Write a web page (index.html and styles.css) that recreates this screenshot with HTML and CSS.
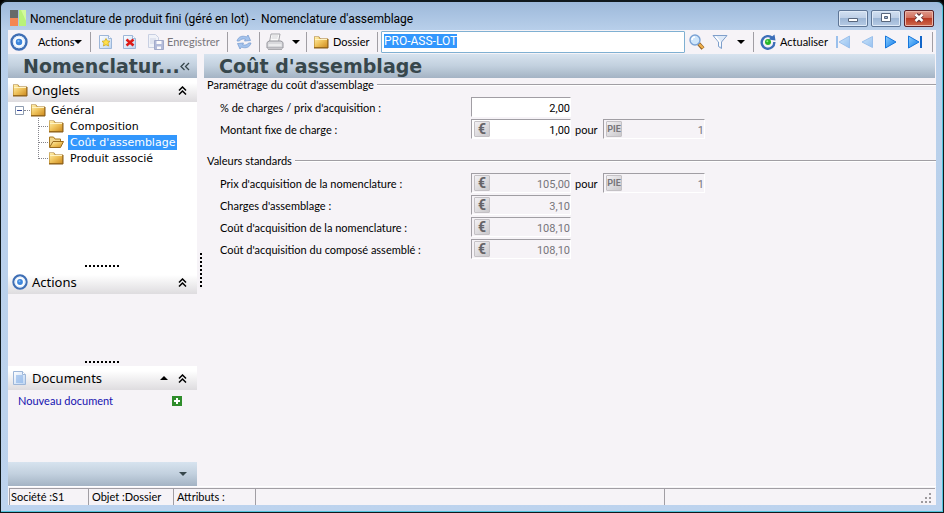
FILE: index.html
```html
<!DOCTYPE html>
<html lang="fr">
<head>
<meta charset="utf-8">
<title>Nomenclature de produit fini</title>
<link rel="stylesheet" href="styles.css">
</head>
<body>
<svg class="defs" aria-hidden="true">
  <defs>
    <linearGradient id="gold" x1="0" y1="0" x2="1" y2="1"><stop offset="0" stop-color="#fff0b0"/><stop offset=".5" stop-color="#efc35c"/><stop offset="1" stop-color="#cf8d22"/></linearGradient>
    <linearGradient id="sky" x1="0" y1="0" x2="1" y2="1"><stop offset="0" stop-color="#8fd0ff"/><stop offset="1" stop-color="#0b78e8"/></linearGradient>
    <linearGradient id="page" x1="0" y1="0" x2="1" y2="1"><stop offset="0" stop-color="#ffffff"/><stop offset="1" stop-color="#bcd4f2"/></linearGradient>
    <symbol id="folder" viewBox="0 0 16 16"><path d="M1 14V2.500h5l1.500 2H15V14z" fill="#a87820"/><path d="M1.500 13V3h4l1.500 2h7.500v8z" fill="url(#gold)"/><path d="M2 5.500h12" stroke="#fff3c4"/><path d="M1 14h14V5" fill="none" stroke="#8a5c18"/></symbol>
    <symbol id="folder-open" viewBox="0 0 16 16"><path d="M1.500 13V3h4l1.500 2h5.500v3" fill="#f3d68a" stroke="#a87820"/><path d="M1.500 13.500L5 7.500h10.500l-3 6z" fill="url(#gold)" stroke="#9a6a1c"/></symbol>
    <symbol id="target" viewBox="0 0 16 16"><circle cx="8" cy="8" r="6.600" fill="#fff" stroke="#3f6fb5" stroke-width="2.200"/><circle cx="8" cy="8" r="5" fill="none" stroke="#dceafa"/><circle cx="8" cy="8" r="2.900" fill="#3d86dc"/><circle cx="7.500" cy="7.300" r="1" fill="#83bcf4"/></symbol>
    <symbol id="sheet" viewBox="0 0 16 16"><path d="M1.500 1.500h9l3 3v10h-12z" fill="url(#page)" stroke="#9db6d8"/><path d="M10.500 1.500v3h3" fill="#fff" stroke="#9db6d8"/></symbol>
    <symbol id="chevrons" viewBox="0 0 9 9"><path d="M1 4.500L4.500 1 8 4.500M1 8.500L4.500 5 8 8.500" fill="none" stroke="#000" stroke-width="1.500"/></symbol>
    <symbol id="caret" viewBox="0 0 8 4"><path d="M0 0h8L4 4z" fill="currentColor"/></symbol>
  </defs>
</svg>
<div class="window">
  <header class="titlebar">
    <svg class="logo" viewBox="0 0 16 16"><path d="M0 0h8v8H0z" fill="#666b69"/><path d="M0 8h8v8H0z" fill="#f48754"/><path d="M9 0h7v16H9z" fill="#b9f279"/><path d="M11 0h5v11z" fill="#d2fa9c"/></svg>
    <h1>Nomenclature de produit fini (géré en lot) - &nbsp;Nomenclature d'assemblage</h1>
    <div class="controls">
      <button type="button" class="control" aria-label="Réduire"><svg viewBox="0 0 16 12"><path d="M3.500 6.500h9v3h-9z" fill="#fff" stroke="#58667c"/></svg></button>
      <button type="button" class="control" aria-label="Agrandir"><svg viewBox="0 0 16 12"><path d="M3.500 1.500h9v8h-9z" fill="#fff" stroke="#58667c"/><path d="M6.500 4.500h3v2h-3z" fill="#a5bad6" stroke="#58667c"/></svg></button>
      <button type="button" class="control close" aria-label="Fermer"><svg viewBox="0 0 16 12"><path d="M5 2.500l6 6.500M11 2.500L5 9" stroke="#5c2f35" stroke-width="4.500"/><path d="M4.500 2.500l7 6.500M11.500 2.500l-7 6.500" stroke="#fff" stroke-width="2.500"/></svg></button>
    </div>
  </header>

  <nav class="toolbar" aria-label="Outils">
    <button type="button" class="tool actions"><svg class="icon-l"><use href="#target"/></svg><span class="grow">Actions</span><svg class="caret"><use href="#caret"/></svg></button>
    <i class="sep"></i>
    <button type="button" class="tool slot" aria-label="Nouveau"><svg class="icon" viewBox="0 0 16 16"><use href="#sheet"/><path d="M8 4.500l1.300 2.400 2.700.4-2 1.900.6 2.800L8 10.700 5.400 12l.6-2.800-2-1.900 2.700-.4z" fill="#ffe04a" stroke="#d0a820" stroke-width=".8"/></svg></button>
    <button type="button" class="tool slot" aria-label="Supprimer"><svg class="icon" viewBox="0 0 16 16"><use href="#sheet"/><path d="M4.500 5.500l7 6M11.500 5.500l-7 6" stroke="#dd1b17" stroke-width="2.600"/></svg></button>
    <button type="button" class="tool save" disabled><svg class="icon" viewBox="0 0 16 16"><g opacity=".65"><path d="M.5.500h7l3 3v10H.5z" fill="#eef2fa" stroke="#b0bcd8"/><path d="M2 5h6M2 7h6M2 9h4" stroke="#b9c5dd"/><path d="M6.500 6.500h9v9h-9z" fill="#8e9cca" stroke="#7583b2"/><path d="M8.500 7h5v3h-5zM9 12.500h4V15H9z" fill="#fff"/></g></svg>Enregistrer</button>
    <i class="sep"></i>
    <button type="button" class="tool square" disabled aria-label="Recharger"><svg class="icon" viewBox="0 0 16 16"><g fill="#a4c3ed" stroke="#7c9fd2" stroke-width=".8"><path d="M1 7C2 3 6 1 10.500 3L12 1l2.500 5.500L8.500 7l1-1.700C7 4.500 4.500 5 3.500 7z"/><path d="M15 9c-1 4-5 6-9.500 4L4 15 1.500 9.500l6-.5-1 1.700c2.500.8 5 .3 6-1.700z"/></g></svg></button>
    <i class="sep"></i>
    <button type="button" class="tool print" aria-label="Imprimer"><svg class="icon-l" viewBox="0 0 18 18"><path d="M5 1h9l-1.500 8h-9z" fill="#fafafa" stroke="#a3a3a8"/><path d="M6 3h6M5.500 5h6" stroke="#d2d2d6"/><path d="M1 9.500L3 8h12l2 1.500V15H1z" fill="#d8d8dc" stroke="#95959c"/><path d="M2.500 12h13" stroke="#fff"/><path d="M2 16.500h14" stroke="#a9a9ae"/></svg><svg class="caret"><use href="#caret"/></svg></button>
    <i class="sep"></i>
    <button type="button" class="tool dossier"><svg class="icon"><use href="#folder"/></svg>Dossier</button>
    <i class="sep"></i>
    <input class="search" id="search" type="text" value="PRO-ASS-LOT" aria-label="Recherche">
    <button type="button" class="tool slot" aria-label="Chercher"><svg class="icon" viewBox="0 0 16 16"><path d="M9.500 9.500l4.500 5" stroke="#8a5b24" stroke-width="4"/><path d="M10 10l4 4" stroke="#f0b14c" stroke-width="2.400"/><circle cx="6" cy="6" r="5" fill="#cfe6fb" stroke="#7ba2d4" stroke-width="1.400"/><path d="M3 6a3 3 0 013-3" fill="none" stroke="#fff" stroke-width="1.500"/></svg></button>
    <button type="button" class="tool filter" aria-label="Filtrer"><svg class="icon" viewBox="0 0 16 16"><path d="M1 1.500h14L9.500 8v6.500l-3-2V8z" fill="#dfeaf8" stroke="#7f9fcb"/><path d="M3.500 2.500L8 8v4" fill="none" stroke="#fff" stroke-width="1.500"/></svg><svg class="caret"><use href="#caret"/></svg></button>
    <i class="sep"></i>
    <button type="button" class="tool refresh"><svg class="icon" viewBox="0 0 16 16"><path d="M12.500 4A6.300 6.300 0 1014.300 8" fill="none" stroke="#3c6eb8" stroke-width="2.400"/><path d="M8.500 5.500L14.500.5l1 6z" fill="#3c6eb8"/><circle cx="8" cy="8" r="3" fill="#28b52a"/><circle cx="7.300" cy="7.200" r="1" fill="#90ef88"/></svg>Actualiser</button>
    <button type="button" class="tool step" disabled aria-label="Premier"><svg class="icon" viewBox="0 0 16 16"><path d="M14.500 2v12L4 8z" fill="url(#sky)" stroke="#1676dc"/><path d="M2 2v12" stroke="#1676dc" stroke-width="2"/></svg></button>
    <button type="button" class="tool step" disabled aria-label="Précédent"><svg class="icon" viewBox="0 0 16 16"><path d="M13.500 2.500v11L3 8z" fill="url(#sky)" stroke="#1676dc"/></svg></button>
    <button type="button" class="tool step" aria-label="Suivant"><svg class="icon" viewBox="0 0 16 16"><path d="M2.500 2v12L13 8z" fill="url(#sky)" stroke="#1676dc"/></svg></button>
    <button type="button" class="tool step" aria-label="Dernier"><svg class="icon" viewBox="0 0 16 16"><path d="M1.500 2v12L12 8z" fill="url(#sky)" stroke="#1676dc"/><path d="M14 2v12" stroke="#1265c8" stroke-width="2"/></svg></button>
    <i class="sep"></i>
  </nav>

  <div class="body">
    <aside class="sidebar">
      <div class="banner side"><h2>Nomenclatur...</h2><button type="button" class="plain" aria-label="Replier"><svg class="fold" viewBox="0 0 10 9"><path d="M4.500 1L1 4.500 4.500 8M9 1L5.500 4.500 9 8" fill="none" stroke="#37474c" stroke-width="1.300"/></svg></button></div>
      <section class="pane tabs">
        <div class="pane-head"><svg class="icon"><use href="#folder"/></svg><h3>Onglets</h3><button type="button" class="plain" aria-label="Replier Onglets"><svg class="chev"><use href="#chevrons"/></svg></button></div>
        <ul class="tree">
          <li><div class="node root"><svg class="box" viewBox="0 0 9 9"><path d="M.5.500h8v8h-8z" fill="#fff" stroke="#8c9bb0"/><path d="M2 4.500h5" stroke="#30459a"/></svg><i class="dots short"></i><svg class="icon"><use href="#folder"/></svg><a href="#">Général</a></div>
            <ul class="branch">
              <li class="node"><i class="dots"></i><svg class="icon"><use href="#folder"/></svg><a href="#">Composition</a></li>
              <li class="node"><i class="dots"></i><svg class="icon"><use href="#folder-open"/></svg><a href="#" class="selected">Coût d'assemblage</a></li>
              <li class="node"><i class="dots"></i><svg class="icon"><use href="#folder"/></svg><a href="#">Produit associé</a></li>
            </ul>
          </li>
        </ul>
      </section>
      <div class="grip"></div>
      <section class="pane acts">
        <div class="pane-head"><svg class="icon"><use href="#target"/></svg><h3>Actions</h3><button type="button" class="plain" aria-label="Replier Actions"><svg class="chev"><use href="#chevrons"/></svg></button></div>
      </section>
      <div class="grip"></div>
      <section class="pane docs">
        <div class="pane-head"><svg class="icon" viewBox="0 0 16 16"><use href="#sheet"/><path d="M4 6h7M4 8h7M4 10h7M4 12h7" stroke="#79a7e4"/></svg><h3>Documents</h3><button type="button" class="plain" aria-label="Monter"><svg class="caret up"><use href="#caret"/></svg></button><button type="button" class="plain" aria-label="Replier Documents"><svg class="chev"><use href="#chevrons"/></svg></button></div>
        <div class="doc"><a href="#">Nouveau document</a><button type="button" class="plain" aria-label="Ajouter"><svg class="plus" viewBox="0 0 10 10"><path d="M0 0h10v10H0z" fill="#2f8d2c"/><path d="M5 2v6M2 5h6" stroke="#fff" stroke-width="2"/></svg></button></div>
      </section>
      <div class="banner foot"><button type="button" class="plain" aria-label="Plus"><svg class="caret"><use href="#caret"/></svg></button></div>
    </aside>
    <div class="splitter"></div>
    <main>
      <div class="banner"><h2>Coût d'assemblage</h2></div>
      <form>
        <section class="group">
          <h3 class="legend">Paramétrage du coût d'assemblage</h3>
          <div class="row"><label for="f1">% de charges / prix d'acquisition :</label><span class="field edit"><input id="f1" type="text" value="2,00"></span></div>
          <div class="row"><label for="f2">Montant fixe de charge :</label><span class="field edit"><button type="button" class="chip euro">€</button><input id="f2" type="text" value="1,00"></span><label class="per" for="u2">pour</label><span class="field unit"><button type="button" class="chip">PIE</button><input id="u2" type="text" value="1" readonly></span></div>
        </section>
        <section class="group">
          <h3 class="legend">Valeurs standards</h3>
          <div class="row"><label for="f3">Prix d'acquisition de la nomenclature :</label><span class="field"><button type="button" class="chip euro">€</button><input id="f3" type="text" value="105,00" readonly></span><label class="per" for="u3">pour</label><span class="field unit"><button type="button" class="chip">PIE</button><input id="u3" type="text" value="1" readonly></span></div>
          <div class="row"><label for="f4">Charges d'assemblage :</label><span class="field"><button type="button" class="chip euro">€</button><input id="f4" type="text" value="3,10" readonly></span></div>
          <div class="row"><label for="f5">Coût d'acquisition de la nomenclature :</label><span class="field"><button type="button" class="chip euro">€</button><input id="f5" type="text" value="108,10" readonly></span></div>
          <div class="row"><label for="f6">Coût d'acquisition du composé assemblé :</label><span class="field"><button type="button" class="chip euro">€</button><input id="f6" type="text" value="108,10" readonly></span></div>
        </section>
      </form>
    </main>
  </div>

  <footer class="status">
    <span>Société :S1</span><span>Objet :Dossier</span><span>Attributs :</span><span></span><span class="last"><svg class="resize" viewBox="0 0 11 11"><path d="M8 0h2v2H8zM4 4h2v2H4zM8 4h2v2H8zM0 8h2v2H0zM4 8h2v2H4zM8 8h2v2H8z" fill="#9d9a9e"/></svg></span>
  </footer>
</div>
<script src="app.js"></script>
</body>
</html>
```
FILE: app.js
```js
const search = document.getElementById("search");
search.focus();
search.select();
```
FILE: styles.css
```css
* { box-sizing: border-box; }
body { margin: 0; background: #000; font: 11px/14px Lato, "Liberation Sans", Arial, sans-serif; color: #000; }
h1, h2, h3, ul { margin: 0; padding: 0; font-weight: normal; list-style: none; }
button, input { font: inherit; color: inherit; }
a { color: inherit; text-decoration: none; }
svg { display: block; flex: none; }
.defs { position: absolute; width: 0; height: 0; }
.icon { width: 16px; height: 16px; }
.icon-l { width: 18px; height: 18px; }
.caret { width: 8px; height: 4px; }
.caret.up { transform: rotate(180deg); }
.chev { width: 9px; height: 9px; }
.box { width: 9px; height: 9px; }
.fold { width: 10px; height: 9px; }
.plus { width: 10px; height: 10px; }
.plain { border: 0; padding: 0; background: none; }

.window { min-height: 100vh; display: flex; flex-direction: column; padding: 0 7px 7px; border: 1px solid #10191d; border-top-width: 2px; border-radius: 7px 7px 0 0; background: linear-gradient(#9db9da, #b8cfea 28px, #bdd3ee); box-shadow: inset 0 -1px #51c4dc, inset -1px 0 #51c4dc; }
.titlebar { height: 28px; display: flex; align-items: center; padding: 6px 2px 2px; gap: 4px; }
.titlebar h1 { flex: 1; padding-top: 1px; font: 12px/16px Roboto, "Noto Sans", sans-serif; white-space: pre; }
.logo { width: 16px; height: 16px; }
.controls { display: flex; gap: 3px; }
.control { width: 30px; height: 17px; padding: 0; display: grid; place-items: center; border: 1px solid #5e7595; border-radius: 2px; background: linear-gradient(#d2e0f1, #bccee5 50%, #9db6d5 50%, #b6cbe5); box-shadow: inset 0 0 0 1px #dfeaf7; }
.control svg { width: 16px; height: 12px; }
.control.close { border-color: #5c2229; background: linear-gradient(#e09a8c, #cf6b58 50%, #b93a24 50%, #cf6a4c); box-shadow: inset 0 0 0 1px #eab4a8; }

.toolbar { height: 24px; display: flex; align-items: center; padding: 0 3px 0 2px; background: #f6f3f7; }
.tool { display: flex; align-items: center; flex: none; height: 22px; padding: 0; border: 0; background: none; white-space: nowrap; }
.tool:disabled { color: #77757a; }
.sep { width: 1px; height: 20px; flex: none; background: #a19ea4; }
.actions { width: 72px; margin-right: 8px; }
.actions .grow { flex: 1; text-align: left; padding-left: 10px; }
.slot { width: 24px; justify-content: center; }
.sep + .slot { margin-left: 3px; }
.save { width: 79px; gap: 3px; margin-left: 6px; }
.square { width: 31px; justify-content: center; }
.print { width: 46px; padding-left: 6px; gap: 8px; }
.dossier { width: 70px; padding-left: 6px; gap: 4px; }
.search { flex: 1; min-width: 60px; height: 22px; margin-left: 3px; padding: 1px 2px 3px; border: 1px solid #7fb0d2; border-radius: 1px; outline: 0; background: #fff; font: 12px/14px Roboto, Arial, sans-serif; }
.search::selection { background: #3297fd; color: #fff; }
.filter { width: 44px; padding-left: 3px; gap: 9px; }
.refresh { width: 77px; padding-left: 6px; gap: 4px; }
.step { width: 24px; justify-content: center; }
.step:disabled svg { opacity: .4; }
.step + .sep { margin-left: 5px; }

.body { flex: 1; display: grid; grid-template-columns: 189px 7px 1fr; background: #f6f3f7; }
.banner { height: 24px; display: flex; align-items: center; padding: 0 15px; background: linear-gradient(#d7e3ef, #c2d0de 50%, #a4b3c4); }
.banner h2 { flex: 1; font: bold 19px/24px "DejaVu Sans", Verdana, sans-serif; color: #37474c; white-space: nowrap; }
.banner.side { padding-right: 9px; }
main .banner { margin-right: 1px; }
.sidebar { display: flex; flex-direction: column; }
.pane-head { height: 24px; display: flex; align-items: center; gap: 10px; padding: 0 10px 0 4px; background: linear-gradient(#fff 20%, #dedcdf); }
.pane-head h3 { flex: 1; margin-left: -6px; font: 13px/20px "Noto Sans", Verdana, sans-serif; }
.tabs { flex: none; height: 184px; background: #fff; }
.grip { height: 8px; padding: 3px 0; }
.tabs + .grip { background: #fff; }
.grip::before { content: ""; display: block; width: 35px; height: 2px; margin: 0 auto; background: repeating-linear-gradient(90deg, #000 0 2px, transparent 2px 4px); }
.acts { height: 88px; }
.docs { flex: 1; }
.tree { font: 11px/16px "DejaVu Sans", Verdana, sans-serif; }
.node { display: flex; align-items: center; height: 16px; }
.root { padding-left: 7px; }
.node a { margin-left: 3px; padding: 0 2px; line-height: 15px; white-space: nowrap; }
.selected { background: #3297fd; color: #fff; }
.dots { width: 10px; height: 0; flex: none; border-top: 1px dotted #85858c; }
.dots.short { width: 6px; }
.branch { margin-left: 30px; background: linear-gradient(#85858c 1px, transparent 1px) 0 0 / 1px 2px repeat-y; }
.branch .node a { margin-left: 4px; }
.branch .node:last-child { background: linear-gradient(#fff, #fff) 0 9px / 1px 7px no-repeat; }
.doc { display: flex; align-items: center; justify-content: space-between; height: 22px; padding: 0 15px 0 10px; color: #1512b0; }
.foot { justify-content: flex-end; padding-right: 10px; color: #37474c; }
.splitter { display: flex; align-items: center; justify-content: center; }
.splitter::before { content: ""; width: 2px; height: 35px; background: repeating-linear-gradient(#000 0 2px, transparent 2px 4px); }

.group { padding-bottom: 14px; }
.legend { display: flex; align-items: center; gap: 3px; height: 14px; margin-bottom: 4px; padding-left: 3px; font-size: 11px; line-height: 14px; white-space: nowrap; }
.legend::after { content: ""; flex: 1; height: 1px; background: #a19ea4; border-bottom: 1px solid #fff; }
.row { display: flex; align-items: center; height: 22px; }
.row label { padding-top: 2px; }
.row label:first-child { width: 267px; padding-left: 16px; }
.row .per { width: 32px; padding-left: 4px; }
.field { width: 100px; height: 20px; display: flex; align-items: center; padding-left: 2px; border: 1px solid; border-color: #a19ea4 #fff #fff #a19ea4; color: #77757a; }
.field.unit { width: 102px; }
.field.edit { background: #fff; color: #000; }
.field input { flex: 1; width: 0; min-width: 0; height: 18px; padding: 2px 0 0; border: 0; outline: 0; background: none; text-align: right; font: 11px/14px Roboto, Arial, sans-serif; }
.chip { width: 16px; height: 16px; flex: none; padding: 0; border: 1px solid #c4c1c5; border-radius: 1px; background: linear-gradient(135deg, #f3f1f4, #cac8cb); color: #77757a; font: bold 9px/14px Roboto, "Liberation Sans", Arial, sans-serif; text-align: center; display: flex; justify-content: center; }
.chip.euro { font-size: 14px; color: #666468; }

.status { display: grid; grid-template-columns: 79px 85px 82px 409px 1fr; height: 19px; padding: 1px 1px 2px; background: #f6f3f7; border-top: 1px solid #fff; }
.status span { border-top: 1px solid #a19ea4; border-left: 1px solid #a19ea4; padding: 1px 3px; white-space: nowrap; }
.status span:first-child { padding-left: 1px; }
.status .last { display: flex; justify-content: flex-end; align-items: flex-end; }
.resize { width: 11px; height: 11px; }
```
